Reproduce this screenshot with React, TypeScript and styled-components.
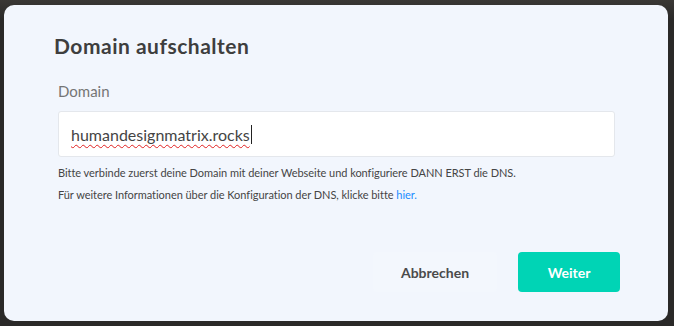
import React from "react";
import styled, { createGlobalStyle } from "styled-components";

const Global = createGlobalStyle`
  html, body { margin: 0; padding: 0; }
  body { background: #2b2a29; width: 674px; height: 326px; overflow: hidden; font-family: Lato, "Noto Sans", sans-serif; }
`;

const Backdrop = styled.div`
  width: 674px;
  height: 326px;
  box-sizing: border-box;
  padding: 5px 6px 5px 4px;
  display: flex;
  background: linear-gradient(180deg, #3a3835 0%, #2a2928 6%, #2a2928 100%);
`;

const Dialog = styled.div`
  flex: 1;
  background: #f2f6fd;
  border-radius: 10px;
  display: flex;
  flex-direction: column;
  padding: 29px 48px 29px 50px;
`;

const Title = styled.h2`
  margin: 0;
  font-family: Lato, sans-serif;
  font-weight: 700;
  font-size: 21px;
  letter-spacing: 0.5px;
  line-height: 24px;
  color: #3e3e3e;
`;

const Field = styled.div`
  display: flex;
  flex-direction: column;
  margin-top: 24px;
  padding: 0 5px 0 4px;
`;

const Label = styled.label`
  font-size: 15px;
  line-height: 18px;
  color: #757575;
  margin-bottom: 11px;
`;

const InputBox = styled.div`
  height: 46px;
  box-sizing: border-box;
  background: #ffffff;
  border: 1px solid #e4e7ec;
  border-radius: 3px;
  display: flex;
  align-items: center;
  padding: 0 12px;
  font-size: 16px;
  color: #444;
`;

const Misspelled = styled.span`
  text-decoration: underline wavy #e02020;
  text-decoration-thickness: 1px;
  text-underline-offset: 3px;
`;

const Caret = styled.span`
  display: inline-block;
  width: 1px;
  height: 19px;
  background: #222;
  margin-left: 1px;
`;

const Help = styled.p`
  margin: 5px 0 0;
  font-size: 11px;
  letter-spacing: -0.04px;
  line-height: 22px;
  color: #454545;
`;

const Link = styled.a`
  color: #1a8cff;
  text-decoration: none;
`;

const Footer = styled.div`
  margin-top: auto;
  display: flex;
  justify-content: flex-end;
  align-items: center;
  gap: 21px;
`;

const Button = styled.button<{ $primary?: boolean }>`
  height: 40px;
  border: none;
  border-radius: 4px;
  font-family: Lato, sans-serif;
  font-weight: 700;
  font-size: 14px;
  cursor: pointer;
  width: ${(p) => (p.$primary ? "102px" : "124px")};
  background: ${(p) => (p.$primary ? "#00d4b5" : "#f3f7fd")};
  color: ${(p) => (p.$primary ? "#ffffff" : "#4a4a4a")};
`;

export default function App() {
  return (
    <>
      <Global />
      <Backdrop>
        <Dialog>
          <Title>Domain aufschalten</Title>
          <Field>
            <Label>Domain</Label>
            <InputBox>
              <Misspelled>humandesignmatrix.rocks</Misspelled>
              <Caret />
            </InputBox>
            <Help>
              Bitte verbinde zuerst deine Domain mit deiner Webseite und konfiguriere DANN ERST die DNS.
              <br />
              Für weitere Informationen über die Konfiguration der DNS, klicke bitte <Link href="#">hier.</Link>
            </Help>
          </Field>
          <Footer>
            <Button>Abbrechen</Button>
            <Button $primary>Weiter</Button>
          </Footer>
        </Dialog>
      </Backdrop>
    </>
  );
}
